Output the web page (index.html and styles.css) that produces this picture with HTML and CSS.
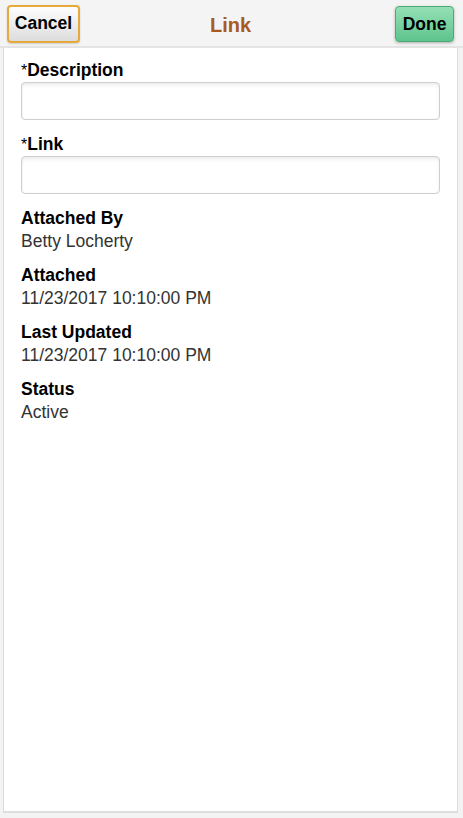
FILE: index.html
```html
<!DOCTYPE html>
<html>
<head>
<meta charset="utf-8">
<title>Link</title>
<link rel="stylesheet" href="styles.css">
</head>
<body>
<div class="page">
  <header class="topbar">
    <div class="left"><button class="btn btn-cancel">Cancel</button></div>
    <h1 class="title">Link</h1>
    <div class="right"><button class="btn btn-done">Done</button></div>
  </header>
  <main class="panel">
    <div class="field">
      <label class="label"><span class="req">*</span>Description</label>
      <div class="input"></div>
    </div>
    <div class="field">
      <label class="label"><span class="req">*</span>Link</label>
      <div class="input"></div>
    </div>
    <div class="info">
      <div class="label">Attached By</div>
      <div class="value">Betty Locherty</div>
    </div>
    <div class="info">
      <div class="label">Attached</div>
      <div class="value">11/23/2017 10:10:00 PM</div>
    </div>
    <div class="info">
      <div class="label">Last Updated</div>
      <div class="value">11/23/2017 10:10:00 PM</div>
    </div>
    <div class="info">
      <div class="label">Status</div>
      <div class="value">Active</div>
    </div>
  </main>
</div>
</body>
</html>
```

FILE: styles.css
```css
html, body {
  margin: 0;
  padding: 0;
  background: #f3f3f3;
  font-family: "Liberation Sans", Arial, sans-serif;
  color: #000;
}
*, *::before, *::after { box-sizing: border-box; }
.page {
  width: 463px;
  height: 818px;
  display: flex;
  flex-direction: column;
}
.topbar {
  height: 48px;
  flex: none;
  display: grid;
  grid-template-columns: 1fr auto 1fr;
  align-items: center;
  padding: 0 9px 0 7px;
  border-bottom: 2px solid #e4e4e4;
  background: #f4f4f4;
}
.left { display: flex; justify-content: flex-start; }
.right { display: flex; justify-content: flex-end; }
.title {
  margin: 4px 0 0;
  font-size: 20px;
  font-weight: bold;
  color: #a95b1f;
}
.btn {
  font-family: "Liberation Sans", Arial, sans-serif;
  font-weight: bold;
  font-size: 17.5px;
  color: #000;
  padding: 0;
  cursor: pointer;
}
.btn-cancel {
  width: 73px;
  height: 38px;
  margin-top: 1px;
  border: 2px solid #e5a93c;
  border-radius: 4px;
  background: linear-gradient(#fefefe, #dcdcdc);
  box-shadow: 0 1px 2px rgba(0,0,0,0.15);
}
.btn-done {
  width: 59px;
  height: 36px;
  margin-top: 2px;
  border: 1px solid #4fa878;
  border-radius: 4px;
  background: linear-gradient(#95e0b6, #5ec48d);
  box-shadow: 0 1px 3px rgba(0,0,0,0.3);
}
.panel {
  flex: none;
  height: 765px;
  margin: 0 5px 0 3px;
  background: #fff;
  border: 1px solid #dcdcdc;
  border-top: none;
  border-bottom: 2px solid #dedede;
  padding: 10.5px 17px 0 17px;
}
.field {
  margin-bottom: 13px;
}
.label {
  display: block;
  font-size: 17.5px;
  font-weight: bold;
  line-height: 23px;
}
.req {
  font-weight: normal;
  font-size: 16px;
}
.input {
  height: 38px;
  border: 1px solid #cfcfcf;
  border-radius: 4px;
  background: #fff;
  box-shadow: inset 0 3px 4px -1px rgba(0,0,0,0.08), inset 0 0 2px rgba(0,0,0,0.05);
}
.info {
  margin-bottom: 11px;
}
.value {
  font-size: 17.5px;
  line-height: 23px;
  color: #333;
}
```
